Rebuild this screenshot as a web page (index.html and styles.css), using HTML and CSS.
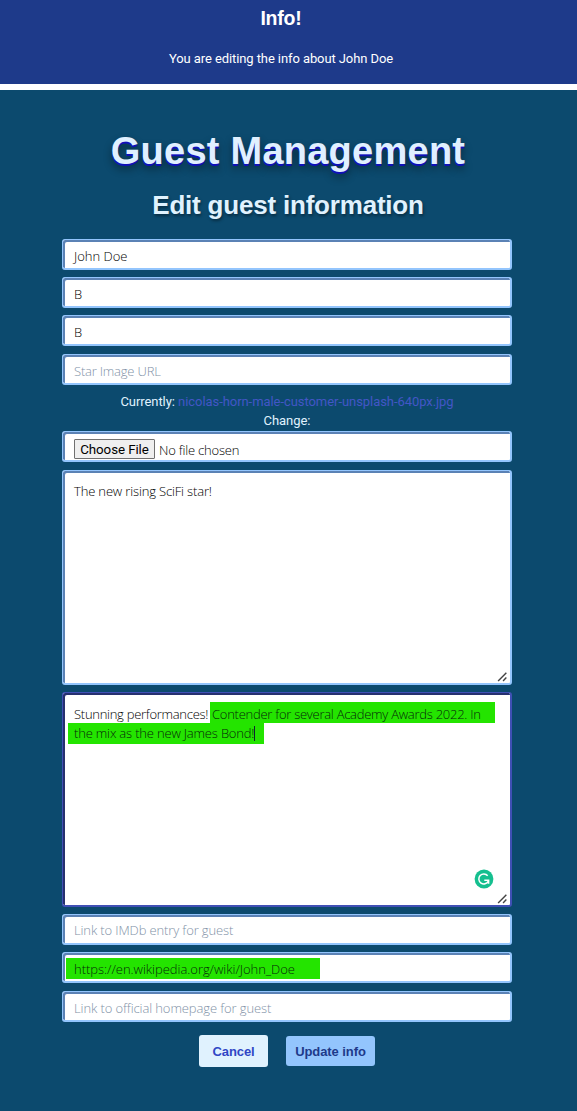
FILE: index.html
```
<!DOCTYPE html>
<html lang="en">
<head>
<meta charset="utf-8">
<title>Guest Management</title>
<link rel="stylesheet" href="styles.css">
</head>
<body>
<header class="notice">
  <h3 class="notice-title">Info!</h3>
  <p class="notice-text"><span class="notice-copy">You are editing the info about John Doe</span></p>
</header>
<main class="page">
  <h1 class="title">Guest Management</h1>
  <h2 class="subtitle">Edit guest information</h2>
  <form class="form">
    <div class="field"><span class="t-name">John Doe</span></div>
    <div class="field"><span>B</span></div>
    <div class="field"><span>B</span></div>
    <div class="field placeholder"><span class="t-star">Star Image URL</span></div>
    <div class="current">
      <div>Currently: <a class="file-link">nicolas-horn-male-customer-unsplash-640px.jpg</a></div>
      <div>Change:</div>
    </div>
    <div class="field file"><span class="choose">Choose File</span><span class="t-nofile">No file chosen</span></div>
    <div class="field area"><span class="t-bio">The new rising SciFi star!</span>
      <svg class="grip" viewBox="0 0 10 10"><path d="M1 9L8.5 1.5M5.5 9L8.5 6"/></svg>
    </div>
    <div class="field area focused">
      <div class="line"><span class="t-stun">Stunning performances!</span><span class="mark first"><span class="t-cont">Contender for several Academy Awards 2022. In</span></span></div>
      <div class="line"><span class="mark second"><span class="t-mix">the mix as the new James Bond!</span><i class="caret"></i></span></div>
      <svg class="assistant" viewBox="0 0 20 20"><circle cx="10" cy="10" r="9.4" fill="#15bf8f"/><path d="M13.7 6.8A5 5 0 1 0 14.3 12.2M10.3 11.3H14.6V14.7" fill="none" stroke="#fff" stroke-width="1.5"/></svg>
      <svg class="grip" viewBox="0 0 10 10"><path d="M1 9L8.5 1.5M5.5 9L8.5 6"/></svg>
    </div>
    <div class="field placeholder imdb"><span class="t-imdb">Link to IMDb entry for guest</span></div>
    <div class="field wiki"><span class="mark url"><span class="t-url">https://en.wikipedia.org/wiki/John_Doe</span></span></div>
    <div class="field placeholder"><span class="t-home">Link to official homepage for guest</span></div>
    <div class="actions">
      <a class="btn cancel">Cancel</a>
      <a class="btn update">Update info</a>
    </div>
  </form>
</main>
</body>
</html>
```
FILE: styles.css
```
* { box-sizing: border-box; }
body { margin: 0; background: #fff; font-family: "Liberation Sans", Arial, sans-serif; }
h1, h2, h3, p { margin: 0; }
.notice { height: 84px; padding-right: 15px; background: #1e3a8a; color: #fff; text-align: center; }
.notice-title { font-size: 19.5px; line-height: 22px; letter-spacing: -0.2px; padding-top: 7px; }
.notice-text { font: 13px/18px Roboto, sans-serif; padding-top: 21px; }
.notice-copy { letter-spacing: -0.09px; }
.page { margin-top: 6px; height: 1021px; padding-top: 37px; background: #0c4a6e; color: #e0f2fe; text-align: center; }
.title { font-size: 38px; line-height: 49px; letter-spacing: 0.25px; margin-right: 1px; color: #e0f0ff; text-shadow: 0 2px 0 #1010b8, 0 5px 8px rgba(0,0,0,.45); }
.subtitle { font-size: 26px; line-height: 32px; margin: 13px 1px 0 0; letter-spacing: -0.2px; text-shadow: 1px 2px 3px rgba(0,0,0,.4); }
.form { display: flex; flex-direction: column; gap: 7.4px; width: 450px; margin: 17.7px 0 0 62px; }
.field { position: relative; height: 31px; flex: none; padding: 5px 9px 0 11px; border: 2px solid #93c5fd; border-top-width: 1px; border-left-width: 1px; border-radius: 3px; background: #fff; box-shadow: inset 2px 2px 0 #5b82b5; font: 350 13px/22px "Open Sans", "Noto Sans", sans-serif; color: #000; text-align: left; white-space: nowrap; }
.placeholder { color: #8292a7; }
.current { height: 39px; margin: 0 0 -7.2px; font: 13px/19px Roboto, sans-serif; letter-spacing: -0.06px; color: #e0f2fe; }
.file-link { color: #4356c6; }
.file { display: flex; gap: 4px; padding-top: 7px; line-height: 22px; }
.choose { width: 81px; height: 20px; border: 1px solid #707070; border-radius: 1px; background: #efefef; color: #000; font: 13.33px/20px Roboto, sans-serif; letter-spacing: -0.08px; text-align: center; }
.area { height: 215px; padding-top: 9px; }
.t-bio { letter-spacing: -0.16px; }
.t-stun { width: 135px; letter-spacing: -0.28px; }
.t-cont { letter-spacing: -0.26px; }
.t-mix { letter-spacing: -0.18px; }
.t-star { letter-spacing: -0.2px; }
.t-imdb { letter-spacing: -0.12px; }
.t-url { letter-spacing: -0.04px; }
.t-home { letter-spacing: -0.1px; }
.t-nofile { letter-spacing: -0.2px; }
.focused { padding-top: 10px; border-color: #4050b5; box-shadow: inset 2px 2px 0 #26306f; }
.line { display: flex; height: 19px; line-height: 22px; }
.first { width: 285px; height: 21px; margin: -1px 0 0 1px; padding: 1px 0 0 2px; }
.mark { display: block; background: #24e400; color: #06280a; }
.second { width: 196px; height: 21px; margin-left: -6px; padding-left: 6px; margin-top: 1px; line-height: 20px; }
.caret { display: inline-block; width: 1px; height: 15px; background: #123; vertical-align: -3px; }
.grip { position: absolute; right: 2px; bottom: 1px; width: 11px; height: 11px; fill: none; stroke: #444; stroke-width: 1.3; }
.assistant { position: absolute; right: 16px; bottom: 16px; width: 20px; height: 20px; }
.imdb { padding-top: 4px; margin-top: -0.6px; }
.wiki { padding: 5px 0 0 3px; }
.url { width: 254px; height: 21px; padding-left: 8px; line-height: 22px; }
.actions { display: flex; align-items: center; gap: 18px; margin: 5.6px 0 0 137px; }
.btn { display: block; border-radius: 3px; font-size: 13px; font-weight: 700; letter-spacing: -0.08px; text-align: center; }
.cancel { width: 69px; height: 32px; line-height: 33px; background: #e0f2fe; color: #3046c5; }
.update { width: 89px; height: 30px; line-height: 31px; background: #93c5fd; color: #1e3a8a; }
```
